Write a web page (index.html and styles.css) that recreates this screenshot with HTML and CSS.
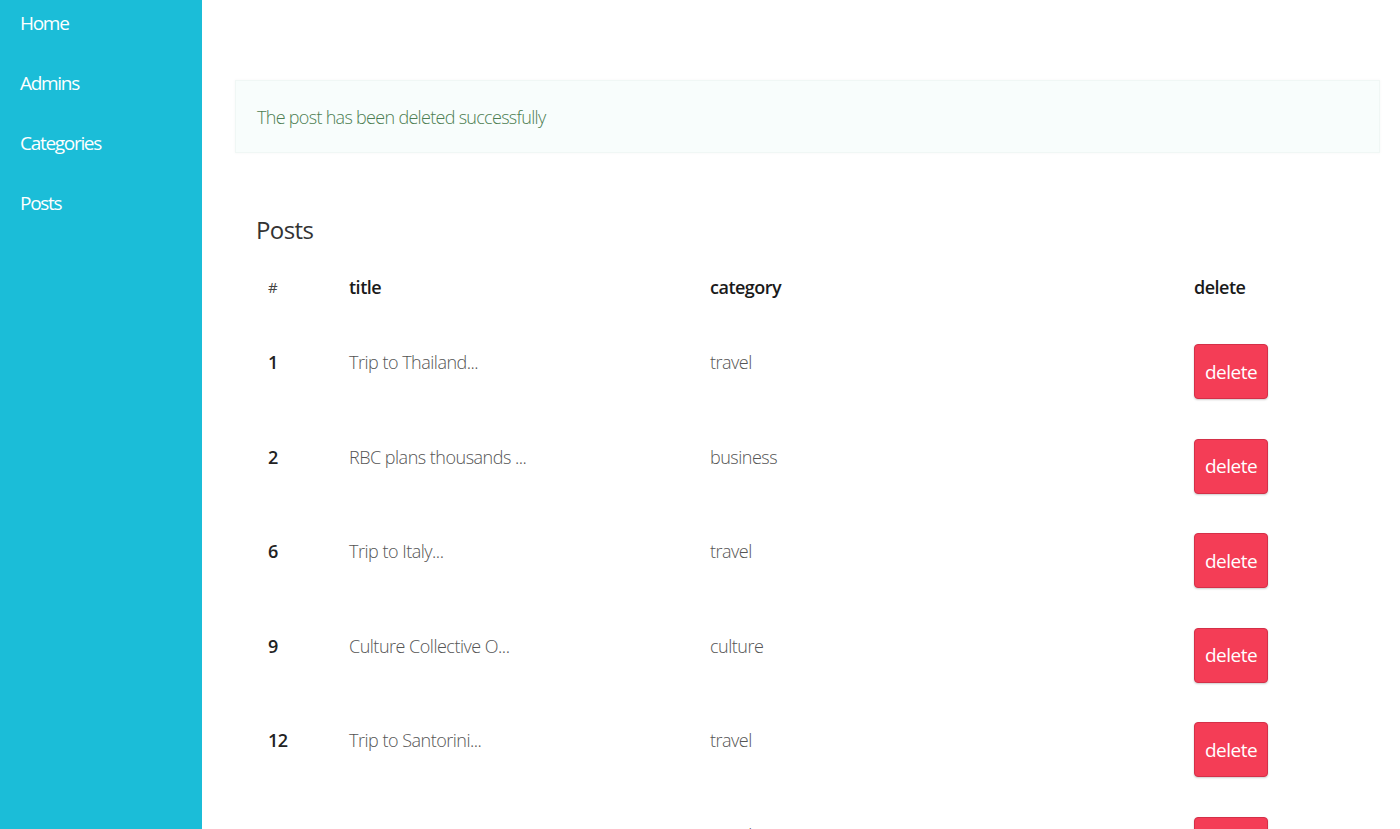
FILE: index.html
```html
<!DOCTYPE html>
<html>
<head>
<meta charset="utf-8">
<link rel="stylesheet" href="styles.css">
</head>
<body>
<div class="layout">
  <nav class="sidebar">
    <a class="nav-link">Home</a>
    <a class="nav-link">Admins</a>
    <a class="nav-link">Categories</a>
    <a class="nav-link">Posts</a>
  </nav>
  <main class="main">
    <div class="alert">The post has been deleted successfully</div>
    <section class="posts">
      <h2 class="posts-title">Posts</h2>
      <div class="table">
        <div class="row head">
          <div class="cell hash">#</div>
          <div class="cell">title</div>
          <div class="cell">category</div>
          <div class="cell">delete</div>
        </div>
        <div class="row">
          <div class="cell id">1</div>
          <div class="cell light">Trip to Thailand...</div>
          <div class="cell light">travel</div>
          <div class="cell"><button class="btn-delete">delete</button></div>
        </div>
        <div class="row">
          <div class="cell id">2</div>
          <div class="cell light">RBC plans thousands ...</div>
          <div class="cell light">business</div>
          <div class="cell"><button class="btn-delete">delete</button></div>
        </div>
        <div class="row">
          <div class="cell id">6</div>
          <div class="cell light">Trip to Italy...</div>
          <div class="cell light">travel</div>
          <div class="cell"><button class="btn-delete">delete</button></div>
        </div>
        <div class="row">
          <div class="cell id">9</div>
          <div class="cell light">Culture Collective O...</div>
          <div class="cell light">culture</div>
          <div class="cell"><button class="btn-delete">delete</button></div>
        </div>
        <div class="row">
          <div class="cell id">12</div>
          <div class="cell light">Trip to Santorini...</div>
          <div class="cell light">travel</div>
          <div class="cell"><button class="btn-delete">delete</button></div>
        </div>
        <div class="row">
          <div class="cell id">15</div>
          <div class="cell light">Trip to Tanzania...</div>
          <div class="cell light">travel</div>
          <div class="cell"><button class="btn-delete">delete</button></div>
        </div>
      </div>
    </section>
  </main>
</div>
</body>
</html>
```
FILE: styles.css
```css
html, body {
  margin: 0;
  padding: 0;
  height: 100%;
  overflow: hidden;
  background: #fff;
  font-family: "Open Sans", "Liberation Sans", sans-serif;
}
.layout {
  display: flex;
  min-height: 100vh;
}
.sidebar {
  width: 202px;
  flex: 0 0 202px;
  background: #1bbdd8;
  display: flex;
  flex-direction: column;
  padding-top: 8px;
  box-sizing: border-box;
  min-height: 100vh;
}
.nav-link {
  color: #fff;
  font-size: 19px;
  font-weight: 500;
  letter-spacing: -1.3px;
  line-height: 30px;
  height: 60px;
  padding-left: 20px;
  display: block;
}
.main {
  flex: 1;
  padding: 80px 20px 0 33px;
  box-sizing: border-box;
}
.alert {
  height: 73px;
  box-sizing: border-box;
  background: #f8fdfc;
  border: 1px solid #f0f7f5;
  box-shadow: 0 0 3px rgba(0,0,0,0.04);
  color: #4d7d52;
  font-size: 18px;
  font-weight: 300;
  letter-spacing: -0.7px;
  padding-left: 21px;
  display: flex;
  align-items: center;
}
.posts {
  padding-left: 21px;
}
.posts-title {
  margin: 55px 0 0;
  font-size: 24px;
  font-weight: 400;
  color: #333;
  line-height: 44px;
  letter-spacing: -0.6px;
}
.table {
  display: flex;
  flex-direction: column;
}
.row {
  display: grid;
  grid-template-columns: 81px 361px 484px 1fr;
  height: 94.5px;
}
.row.head {
  height: 78px;
  align-items: center;
}
.cell {
  padding-left: 12px;
  padding-top: 14px;
  font-size: 18px;
  line-height: 36px;
  color: #222;
  letter-spacing: -0.5px;
}
.head .cell {
  padding-top: 0;
  padding-bottom: 8px;
  font-weight: 600;
  color: #1a1a1a;
}
.head .cell.hash {
  font-weight: 400;
  font-size: 15px;
  color: #444;
}
.cell.id {
  font-weight: 600;
  color: #222;
}
.cell.light {
  font-weight: 300;
  color: #555;
}
.btn-delete {
  width: 74px;
  height: 55px;
  border: 1px solid #d43048;
  border-radius: 4px;
  background: #f43d56;
  color: #fff;
  font-family: inherit;
  font-size: 19px;
  letter-spacing: -0.5px;
  padding: 0;
  cursor: pointer;
  box-shadow: 0 1px 2px rgba(0,0,0,0.2);
}
```
